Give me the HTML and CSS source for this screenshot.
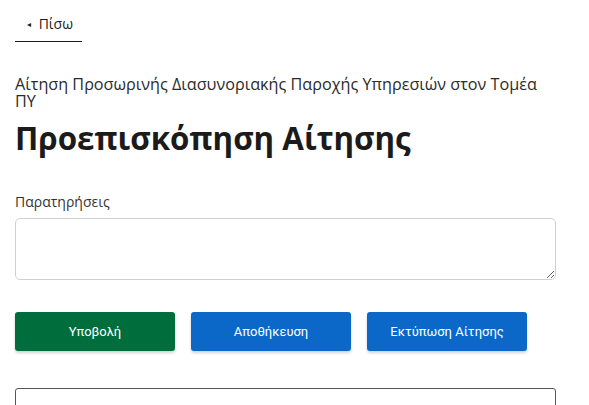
FILE: index.html
```html
<!DOCTYPE html>
<html lang="el">
<head>
    <meta charset="UTF-8">
    <meta name="viewport" content="width=device-width, initial-scale=1.0">
    <title>Προεπισκόπηση Αίτησης</title>
    <link rel="stylesheet" href="styles.css">
</head>
<body>
    <div class="container">
        <a href="#" class="back-link"><span class="back-arrow">&#9666;</span> Πίσω</a>

        <p class="caption">Αίτηση Προσωρινής Διασυνοριακής Παροχής Υπηρεσιών στον Τομέα ΠΥ</p>
        <h1>Προεπισκόπηση Αίτησης</h1>

        <div class="field">
            <label for="remarks">Παρατηρήσεις</label>
            <textarea id="remarks"></textarea>
        </div>

        <div class="button-group">
            <button class="btn btn-green">Υποβολή</button>
            <button class="btn btn-blue">Αποθήκευση</button>
            <button class="btn btn-blue">Εκτύπωση Αίτησης</button>
        </div>

        <div class="preview-box"></div>
    </div>
</body>
</html>
```

FILE: styles.css
```css
/* Γενικά */
body {
    margin: 0;
    font-family: "Open Sans", "Noto Sans", Arial, sans-serif;
    color: #1b1b1b;
    background: #fff;
}

.container {
    width: 541px;
    padding: 12px 15px 0;
}

/* Σύνδεσμος επιστροφής */
.back-link {
    display: inline-block;
    padding: 2px 9px 8px 12px;
    border-bottom: 1px solid #1b1b1b;
    color: #1b1b1b;
    text-decoration: none;
    font-size: 14px;
    font-weight: 500;
}

.back-arrow {
    font-size: 8px;
    vertical-align: 2px;
    margin-right: 4px;
}

.caption {
    margin: 34px 0 0;
    font-size: 16.2px;
    line-height: 17px;
    color: #2b2b2b;
}

h1 {
    margin: 7px 0 0;
    font-size: 31.3px;
    line-height: 42px;
    font-weight: 700;
    color: #1b1b1b;
}

/* Πεδίο παρατηρήσεων */
.field {
    margin-top: 33px;
}

.field label {
    display: block;
    font-size: 14px;
    color: #333;
    margin-bottom: 7px;
}

.field textarea {
    display: block;
    width: 100%;
    height: 62px;
    box-sizing: border-box;
    border: 1px solid #d0d0d0;
    border-radius: 5px;
    resize: vertical;
}

/* Κουμπιά */
.button-group {
    display: flex;
    gap: 16px;
    margin-top: 32px;
}

.btn {
    width: 160px;
    height: 39px;
    border: none;
    border-radius: 3px;
    color: #fff;
    font-family: Roboto, Arial, sans-serif;
    font-size: 13px;
    cursor: pointer;
    box-shadow: 0 2px 3px rgba(0, 0, 0, 0.18);
}

.btn-green {
    background-color: #006e3c;
}

.btn-blue {
    background-color: #0b68c8;
}

.preview-box {
    margin-top: 37px;
    height: 40px;
    border: 1px solid #555;
    border-radius: 3px;
}
```
